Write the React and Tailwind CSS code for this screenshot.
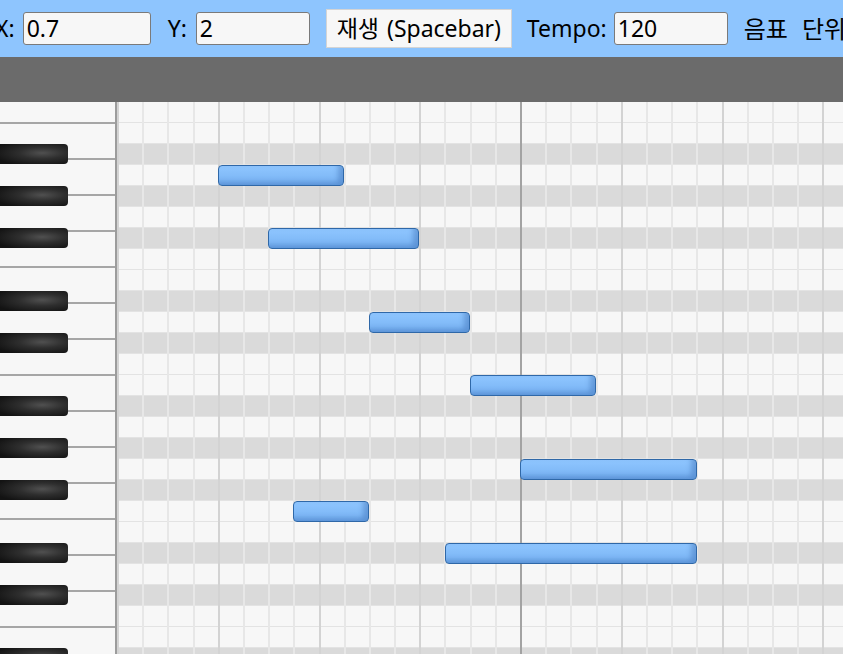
import React from 'react';

const ROW_H = 21;
const COL_W = 25.2;
const ROWS = 27;
const COLS = 30;
const BLACK = [1, 3, 6, 8, 10];

// row 0 = C, rows go down in pitch
const isBlackRow = (r) => BLACK.includes((12 - (r % 12)) % 12);

const notes = [
    { row: 3, col: 4, len: 5 },
    { row: 6, col: 6, len: 6 },
    { row: 10, col: 10, len: 4 },
    { row: 13, col: 14, len: 5 },
    { row: 17, col: 16, len: 7 },
    { row: 19, col: 7, len: 3 },
    { row: 21, col: 13, len: 10 },
];

const Field = ({ value, width }) => (
    <input
        readOnly
        value={value}
        className={`${width} h-[33px] px-[3px] bg-[#f7f7f7] border border-[#7a7a7a] rounded-[3px] text-[23px] text-black outline-none`}
    />
);

const Toolbar = () => (
    <div className="h-[57px] bg-[#8ec5fe] flex items-center whitespace-nowrap text-[23px] text-black -ml-[5px] overflow-hidden">
        <span className="shrink-0">X:</span>
        <span className="shrink-0 ml-[8px]"><Field value="0.7" width="w-[128px]" /></span>
        <span className="shrink-0 ml-[17px]">Y:</span>
        <span className="shrink-0 ml-[9px]"><Field value="2" width="w-[114px]" /></span>
        <button className="shrink-0 ml-[16px] h-[39px] w-[186px] bg-[#f7f7f7] border border-[#d4d4d4] text-[23px] flex items-center justify-center gap-[8px]">
            <span>재생</span>
            <span>(Spacebar)</span>
        </button>
        <span className="shrink-0 ml-[15px]">Tempo:</span>
        <span className="shrink-0 ml-[7px]"><Field value="120" width="w-[114px]" /></span>
        <span className="shrink-0 ml-[16px] text-[24px]">음표</span>
        <span className="shrink-0 ml-[14px] text-[24px]">단위</span>
    </div>
);

const Keyboard = () => {
    const whites = [22];
    for (let i = 0; i < 15; i++) whites.push(36);
    const blackRows = [];
    for (let r = 0; r < ROWS; r++) if (isBlackRow(r)) blackRows.push(r);
    return (
        <div className="relative w-[117px] shrink-0 border-r-2 border-[#9c9c9c] overflow-hidden">
            <div className="flex flex-col">
                {whites.map((h, i) => (
                    <div
                        key={i}
                        className="shrink-0 bg-[#f7f7f7] border-b-2 border-[#a6a6a6]"
                        style={{ height: h }}
                    />
                ))}
            </div>
            {blackRows.map((r) => (
                <div
                    key={r}
                    className="absolute left-0 w-[68px] h-[20px] rounded-r-[4px] bg-[radial-gradient(ellipse_at_62%_45%,#505050_0%,#2e2e2e_38%,#131313_85%)]"
                    style={{ top: r * ROW_H }}
                />
            ))}
        </div>
    );
};

const Grid = () => {
    const rows = Array.from({ length: ROWS }, (_, r) => r);
    const cols = Array.from({ length: COLS }, (_, c) => c);
    return (
        <div className="relative flex-1 overflow-hidden">
            <div className="flex flex-col">
                {rows.map((r) => (
                    <div
                        key={r}
                        className={`h-[21px] shrink-0 border-b border-[#e3e3e3] ${isBlackRow(r) ? 'bg-[#dadada]' : 'bg-[#f7f7f7]'}`}
                    />
                ))}
            </div>
            <div className="absolute inset-0 flex">
                {cols.map((c) => (
                    <div
                        key={c}
                        className={`h-full w-[25.2px] shrink-0 border-l-2 ${c % 4 === 0 ? 'border-[#d3d3d3]' : 'border-[#e7e7e7]'}`}
                    />
                ))}
            </div>
            <div className="absolute top-0 bottom-0 left-[403px] w-[2px] bg-[#a3a3a3]" />
            {notes.map((n, i) => (
                <div
                    key={i}
                    className="absolute h-[21px] rounded-[4px] border border-[#2f68a8] bg-[linear-gradient(to_bottom,#8fc6ff,#77b2f3)] shadow-[inset_-5px_-3px_5px_rgba(40,90,160,0.35)]"
                    style={{ top: n.row * ROW_H, left: n.col * COL_W, width: n.len * COL_W }}
                />
            ))}
        </div>
    );
};

export default function App() {
    return (
        <div className="w-[843px] h-[654px] overflow-hidden bg-white font-['Noto_Sans','Noto_Sans_CJK_KR',sans-serif]">
            <Toolbar />
            <div className="h-[45px] bg-[#6b6b6b]" />
            <div className="flex h-[552px]">
                <Keyboard />
                <Grid />
            </div>
        </div>
    );
}
